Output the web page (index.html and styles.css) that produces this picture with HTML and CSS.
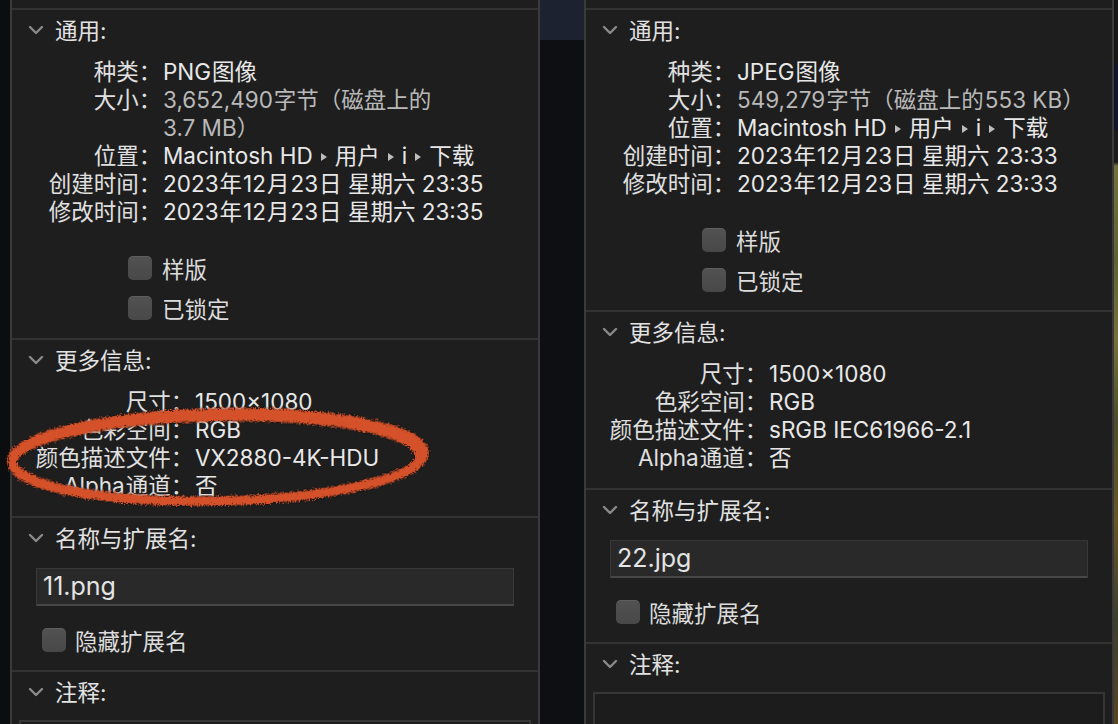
FILE: index.html
```html
<!DOCTYPE html>
<html lang="zh-CN">
<head>
<meta charset="utf-8">
<title>简介</title>
<link rel="stylesheet" href="styles.css">
</head>
<body>
<div class="screen">
  <div class="edge-left"></div>

  <div class="panel">
    <div class="cap"></div>
    <section class="sec sec-general">
      <div class="hdr"><svg class="chev" viewBox="0 0 16 10"><polyline points="2,2 8,8 14,2"/></svg><span>通用:</span></div>
      <div class="rows rows-general">
        <div class="lbl">种类<span class="colon">：</span></div><div class="val">PNG<i class="sp"></i>图像</div>
        <div class="lbl">大小<span class="colon">：</span></div><div class="val dim">3,652,490<i class="sp"></i>字节（磁盘上的<br>3.7 MB）</div>
        <div class="lbl">位置<span class="colon">：</span></div><div class="val">Macintosh HD<i class="tri"></i>用户<i class="tri"></i>i<i class="tri"></i>下载</div>
        <div class="lbl">创建时间<span class="colon">：</span></div><div class="val">2023<i class="sp"></i>年<i class="sp"></i>12<i class="sp"></i>月<i class="sp"></i>23<i class="sp"></i>日 星期六 23:35</div>
        <div class="lbl">修改时间<span class="colon">：</span></div><div class="val">2023<i class="sp"></i>年<i class="sp"></i>12<i class="sp"></i>月<i class="sp"></i>23<i class="sp"></i>日 星期六 23:35</div>
      </div>
      <div class="checks">
        <div class="check"><span class="box"></span>样版</div>
        <div class="check"><span class="box"></span>已锁定</div>
      </div>
    </section>
    <section class="sec sec-more">
      <div class="hdr"><svg class="chev" viewBox="0 0 16 10"><polyline points="2,2 8,8 14,2"/></svg><span>更多信息:</span></div>
      <div class="rows rows-more">
        <div class="lbl">尺寸<span class="colon">：</span></div><div class="val">1500×1080</div>
        <div class="lbl">色彩空间<span class="colon">：</span></div><div class="val">RGB</div>
        <div class="lbl">颜色描述文件<span class="colon">：</span></div><div class="val">VX2880-4K-HDU</div>
        <div class="lbl">Alpha<i class="sp"></i>通道<span class="colon">：</span></div><div class="val">否</div>
      </div>
    </section>
    <section class="sec sec-name">
      <div class="hdr"><svg class="chev" viewBox="0 0 16 10"><polyline points="2,2 8,8 14,2"/></svg><span>名称与扩展名:</span></div>
      <div class="field">11.png</div>
      <div class="check check-hide"><span class="box"></span>隐藏扩展名</div>
    </section>
    <section class="sec sec-note">
      <div class="hdr"><svg class="chev" viewBox="0 0 16 10"><polyline points="2,2 8,8 14,2"/></svg><span>注释:</span></div>
      <div class="note-box"></div>
    </section>
  </div>

  <div class="gap"></div>

  <div class="panel">
    <div class="cap"></div>
    <section class="sec sec-general">
      <div class="hdr"><svg class="chev" viewBox="0 0 16 10"><polyline points="2,2 8,8 14,2"/></svg><span>通用:</span></div>
      <div class="rows rows-general">
        <div class="lbl">种类<span class="colon">：</span></div><div class="val">JPEG<i class="sp"></i>图像</div>
        <div class="lbl">大小<span class="colon">：</span></div><div class="val dim">549,279<i class="sp"></i>字节（磁盘上的<i class="sp"></i>553 KB）</div>
        <div class="lbl">位置<span class="colon">：</span></div><div class="val">Macintosh HD<i class="tri"></i>用户<i class="tri"></i>i<i class="tri"></i>下载</div>
        <div class="lbl">创建时间<span class="colon">：</span></div><div class="val">2023<i class="sp"></i>年<i class="sp"></i>12<i class="sp"></i>月<i class="sp"></i>23<i class="sp"></i>日 星期六 23:33</div>
        <div class="lbl">修改时间<span class="colon">：</span></div><div class="val">2023<i class="sp"></i>年<i class="sp"></i>12<i class="sp"></i>月<i class="sp"></i>23<i class="sp"></i>日 星期六 23:33</div>
      </div>
      <div class="checks">
        <div class="check"><span class="box"></span>样版</div>
        <div class="check"><span class="box"></span>已锁定</div>
      </div>
    </section>
    <section class="sec sec-more">
      <div class="hdr"><svg class="chev" viewBox="0 0 16 10"><polyline points="2,2 8,8 14,2"/></svg><span>更多信息:</span></div>
      <div class="rows rows-more">
        <div class="lbl">尺寸<span class="colon">：</span></div><div class="val">1500×1080</div>
        <div class="lbl">色彩空间<span class="colon">：</span></div><div class="val">RGB</div>
        <div class="lbl">颜色描述文件<span class="colon">：</span></div><div class="val">sRGB IEC61966-2.1</div>
        <div class="lbl">Alpha<i class="sp"></i>通道<span class="colon">：</span></div><div class="val">否</div>
      </div>
    </section>
    <section class="sec sec-name">
      <div class="hdr"><svg class="chev" viewBox="0 0 16 10"><polyline points="2,2 8,8 14,2"/></svg><span>名称与扩展名:</span></div>
      <div class="field">22.jpg</div>
      <div class="check check-hide"><span class="box"></span>隐藏扩展名</div>
    </section>
    <section class="sec sec-note">
      <div class="hdr"><svg class="chev" viewBox="0 0 16 10"><polyline points="2,2 8,8 14,2"/></svg><span>注释:</span></div>
      <div class="note-box"></div>
    </section>
  </div>

  <div class="edge-right"></div>

  <svg class="circle-mark" viewBox="0 0 450 120" width="450" height="120">
    <defs>
      <filter id="rough" x="-5%" y="-30%" width="110%" height="160%">
        <feTurbulence type="fractalNoise" baseFrequency="0.85" numOctaves="3" seed="4" result="noise"/>
        <feDisplacementMap in="SourceGraphic" in2="noise" scale="8" xChannelSelector="R" yChannelSelector="G" result="d"/>
        <feDropShadow dx="0" dy="0" stdDeviation="1.3" flood-color="#000" flood-opacity="0.85"/>
      </filter>
    </defs>
    <g filter="url(#rough)" fill="none" stroke="#d4512a" transform="rotate(-1.2 218 58)">
      <ellipse cx="218" cy="57" rx="206" ry="44" stroke-width="9"/>
      <ellipse cx="215" cy="60" rx="203" ry="42" stroke-width="6"/>
    </g>
  </svg>
</div>
</body>
</html>
```

FILE: styles.css
```css
html, body {
  margin: 0;
  padding: 0;
  background: #0d0e10;
}

.screen {
  position: relative;
  width: 1118px;
  height: 724px;
  overflow: hidden;
  display: flex;
  align-items: stretch;
  font-family: Inter, "Noto Sans CJK SC", sans-serif;
  font-size: 22.5px;
  color: #e4e4e4;
}

.edge-left {
  width: 10px;
  flex: none;
  background: #0c0d0f;
}

.gap {
  width: 44px;
  flex: none;
  background: linear-gradient(#1d2230 0, #1d2230 40px, #0e0f12 40px);
}

.edge-right {
  width: 4px;
  flex: none;
  background: linear-gradient(#161616 0, #161616 62px, #10142c 66px, #10142c 128px, #1a1a1a 132px, #1a1a1a 162px, #74703e 166px, #5d6236 260px, #77703c 340px, #4a4e2c 420px, #6a5428 520px, #3a3f2c 620px, #5a4424 724px);
}

.panel {
  width: 530px;
  flex: none;
  box-sizing: border-box;
  background: #1e1e1e;
  border-left: 2px solid #3a3a3a;
  border-right: 2px solid #3a3a3a;
  display: flex;
  flex-direction: column;
}

.cap {
  height: 8px;
  flex: none;
}

.sec {
  border-top: 2px solid #333333;
}

.sec-general { padding-bottom: 10px; }
.sec-more { padding-bottom: 16px; }
.sec-name { padding-bottom: 10px; }
.sec-note { flex: 1; }

.hdr {
  height: 37px;
  padding-bottom: 3px;
  display: flex;
  align-items: center;
  padding-left: 16px;
  color: #e2e2e2;
}

.chev {
  width: 16px;
  height: 10px;
  margin-right: 11px;
  margin-top: 3px;
  flex: none;
}

.chev polyline {
  fill: none;
  stroke: #8a8a8a;
  stroke-width: 2.4;
  stroke-linecap: round;
  stroke-linejoin: round;
}

.rows {
  display: grid;
  margin-top: 8px;
  line-height: 28px;
}

.rows-general { grid-template-columns: 151px 1fr; }
.rows-more { grid-template-columns: 183px 1fr; }

.lbl {
  text-align: right;
  white-space: nowrap;
  color: #e0e0e0;
}

.colon {
  font-feature-settings: "halt" 1;
  margin-right: 13px;
}

.val {
  white-space: nowrap;
  color: #e8e8e8;
}

.val.dim {
  color: #b9b9b9;
}

.sp {
  display: inline-block;
  width: 1px;
}

.tri {
  display: inline-block;
  width: 0;
  height: 0;
  border-left: 6px solid #bdbdbd;
  border-top: 4px solid transparent;
  border-bottom: 4px solid transparent;
  margin: 0 8px;
  vertical-align: 3px;
}

.checks {
  margin-top: 22px;
  padding-left: 116px;
}

.check {
  height: 40px;
  display: flex;
  align-items: center;
  color: #dcdcdc;
}

.box {
  width: 24px;
  height: 24px;
  flex: none;
  box-sizing: border-box;
  border-radius: 5px;
  background: linear-gradient(#525252, #484848);
  box-shadow: inset 0 1px 0 rgba(255, 255, 255, 0.07);
  margin-right: 10px;
}

.field {
  margin: 10px 24px 0;
  height: 38px;
  box-sizing: border-box;
  background: #292929;
  border: 1px solid #383838;
  border-bottom: 2px solid #474747;
  padding-left: 6px;
  font-size: 25px;
  line-height: 35px;
  color: #e4e4e4;
}

.check-hide {
  margin-top: 14px;
  padding-left: 30px;
}

.check-hide .box {
  margin-right: 9px;
}

.note-box {
  margin: 8px 7px 0;
  height: 80px;
  border: 2px solid #363636;
  background: #1c1c1c;
}

.circle-mark {
  position: absolute;
  left: 0;
  top: 400px;
  overflow: visible;
}
```
